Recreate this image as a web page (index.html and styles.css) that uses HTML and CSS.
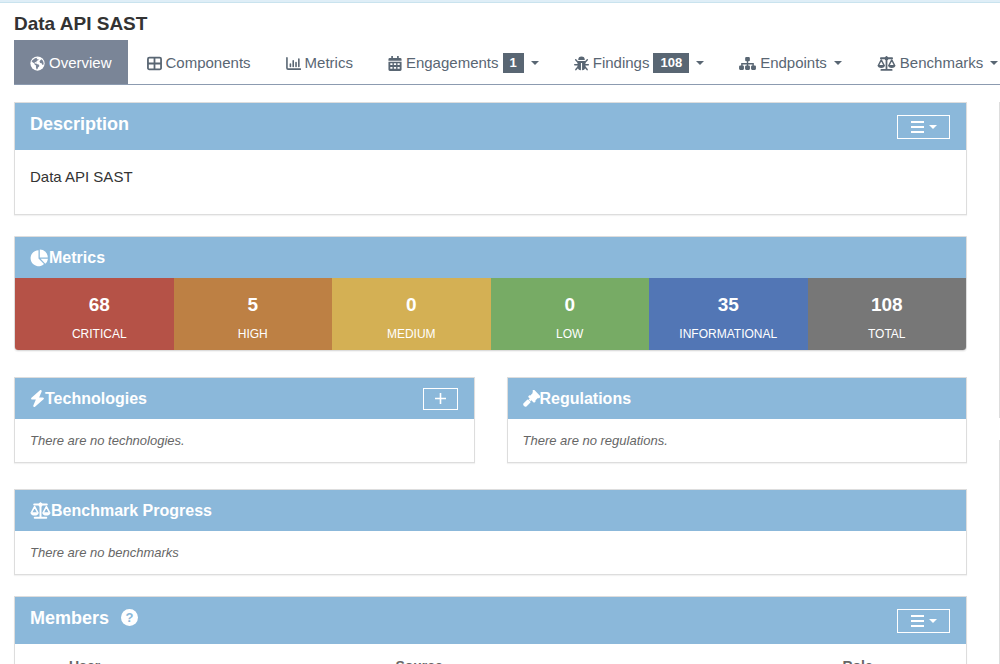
FILE: index.html
```html
<!DOCTYPE html>
<html lang="en">
<head>
<meta charset="utf-8">
<title>Data API SAST</title>
<link rel="stylesheet" href="styles.css">
</head>
<body>
<svg class="defs" aria-hidden="true">
  <symbol id="scale" viewBox="0 0 20 16">
    <path d="M4 2.4h12M10 1v13.5M4.5 14.8h11" fill="none" stroke="currentColor" stroke-width="1.9" stroke-linecap="round"/>
    <circle cx="10" cy="2.6" r="2" fill="currentColor"/>
    <path d="M1.4 10 4.4 4.2 7.4 10M12.6 10l3-5.8 3 5.8" fill="none" stroke="currentColor" stroke-width="1.5" stroke-linejoin="round"/>
    <path d="M.4 9.6h8c0 2.100-1.800 3.200-4 3.200s-4-1.100-4-3.200zM11.600 9.600h8c0 2.100-1.800 3.200-4 3.200s-4-1.100-4-3.200z" fill="currentColor"/>
  </symbol>
</svg>
<div class="topline"></div>
<header class="product">
  <h1>Data API SAST</h1>
  <nav class="tabs">
    <a class="tab active" href="#overview">
      <svg class="icon" width="15" height="15" viewBox="0 0 16 16"><circle cx="8" cy="8" r="7.600" fill="currentColor"/><path fill="#7a8597" d="M1.600 5.500 3 7l1.500.800.600 1.400 1.400.900-.200 1.500.700 2.800 1-.500.500-1.600 1.400-1.500-.200-1.400-1.800-.600-1.300-.900-1.400.100-.300-1.200 1-.500.900.700.100-1.300 1.500-1.200 1-.300-.900-1-.900.500-.600-.700.900-1.200-2.600.500-2.500 1.900zM11 4.400l1.300-.900 1.600 1.700.7 2.600-.5 1.900-1.300-.7-.3-1.300-1.600-.3-.8-1.500z"/></svg>
      Overview</a>
    <a class="tab" href="#components">
      <svg class="icon" width="15" height="15" viewBox="0 0 16 16"><path d="M2.500 1.800h11a1.500 1.500 0 0 1 1.500 1.500v9.400a1.500 1.500 0 0 1-1.500 1.500h-11a1.500 1.500 0 0 1-1.500-1.500V3.300a1.500 1.500 0 0 1 1.500-1.500zM8 2v12M1 8h14" fill="none" stroke="currentColor" stroke-width="1.900"/></svg>
      Components</a>
    <a class="tab" href="#metrics">
      <svg class="icon" width="15" height="15" viewBox="0 0 16 16"><path d="M1 2v10.800q0 1.200 1.200 1.200H15.400" fill="none" stroke="currentColor" stroke-width="1.700" stroke-linecap="round"/><path d="M4.700 11.200V8.500M7.700 11.200V5M10.700 11.200V7M13.700 11.200V3.200" stroke="currentColor" stroke-width="1.700" stroke-linecap="round"/></svg>
      Metrics</a>
    <a class="tab" href="#engagements">
      <svg class="icon" width="14" height="15" viewBox="0 0 14 16"><path fill="currentColor" fill-rule="evenodd" d="M3 0h1.800v2h4.400V0H11v2h1.500Q14 2 14 3.500V5H0V3.500Q0 2 1.500 2H3zM0 6h14v8.500q0 1.500-1.500 1.500h-11Q0 16 0 14.500zM2 7.700v1.800h2.300v-1.800zm3.800 0v1.800h2.400v-1.800zm3.900 0v1.800H12v-1.800zM2 11.700v1.800h2.300v-1.800zm3.800 0v1.800h2.400v-1.800zm3.900 0v1.800H12v-1.800z"/></svg>
      Engagements <span class="badge">1</span><span class="caret"></span></a>
    <a class="tab" href="#findings">
      <svg class="icon" width="15" height="15" viewBox="0 0 16 16"><path d="M4.500 4.200a3.500 3.700 0 0 1 7 0zM3.800 5.200h8.400V11q0 4-3.600 4.300V7.500H7.400v7.800Q3.800 15 3.800 11z" fill="currentColor"/><path d="M4.300 6.800 1.800 4M11.700 6.800 14.200 4M4 9.300H.8M12 9.300h3.200M4.500 11.500 2 14.500M11.500 11.500l2.500 3" stroke="currentColor" stroke-width="1.600" stroke-linecap="round"/></svg>
      Findings <span class="badge">108</span><span class="caret"></span></a>
    <a class="tab" href="#endpoints">
      <svg class="icon" width="17" height="15" viewBox="0 0 18 16"><path d="M9 5v6M3 11V8.200h12V11" fill="none" stroke="currentColor" stroke-width="1.500"/><g fill="currentColor"><rect x="6.500" y="1" width="5" height="4.600" rx="1.200"/><rect x="0" y="10.200" width="5.200" height="4.600" rx="1.200"/><rect x="6.400" y="10.200" width="5.200" height="4.600" rx="1.200"/><rect x="12.800" y="10.200" width="5.200" height="4.600" rx="1.200"/></g></svg>
      Endpoints<span class="caret"></span></a>
    <a class="tab" href="#benchmarks">
      <svg class="icon" width="19" height="15"><use href="#scale"/></svg>
      Benchmarks<span class="caret"></span></a>
  </nav>
</header>
<div class="layout">
  <main class="content">
    <section class="panel">
      <div class="head tall"><h2>Description</h2>
        <button class="menu" aria-label="Description menu"><svg width="13" height="12" viewBox="0 0 13 12"><path d="M0 1h13M0 6h13M0 11h13" stroke="currentColor" stroke-width="2"/></svg><span class="caret"></span></button>
      </div>
      <p class="description">Data API SAST</p>
    </section>
    <section class="panel metrics">
      <div class="head"><h3><svg class="icon" width="19" height="18" viewBox="0 0 19 18"><path fill="currentColor" d="M8.500 1.200v8.300l5.500 5.600A8 8 0 1 1 8.500 1.200zM9.800.5a8 8 0 0 1 8 8h-8zM10.600 9.700H18a8 8 0 0 1-2.700 5z"/></svg>Metrics</h3></div>
      <div class="tiles">
        <div class="tile critical"><strong>68</strong><span>CRITICAL</span></div>
        <div class="tile high"><strong>5</strong><span>HIGH</span></div>
        <div class="tile medium"><strong>0</strong><span>MEDIUM</span></div>
        <div class="tile low"><strong>0</strong><span>LOW</span></div>
        <div class="tile info"><strong>35</strong><span>INFORMATIONAL</span></div>
        <div class="tile total"><strong>108</strong><span>TOTAL</span></div>
      </div>
    </section>
    <div class="split">
      <section class="panel">
        <div class="head"><h3><svg class="icon" width="15" height="17" viewBox="0 0 448 512"><path fill="currentColor" d="M349.4 44.6c5.900-13.700 1.500-29.700-10.600-38.500s-28.600-8-39.900 1.800l-256 224C32.900 240.700 29.200 255.200 34.200 267.800S50.500 288 64 288H175.500L98.600 467.400c-5.900 13.700-1.500 29.700 10.600 38.500s28.600 8 39.900-1.800l256-224c10-8.800 13.600-23.200 8.700-35.700S397.500 224 384 224H272.500L349.400 44.600z"/></svg>Technologies</h3>
          <button class="add" aria-label="Add technology"><svg width="11" height="11" viewBox="0 0 11 11"><path d="M5.500 0v11M0 5.500h11" stroke="currentColor" stroke-width="1.600"/></svg></button>
        </div>
        <p class="empty">There are no technologies.</p>
      </section>
      <section class="panel">
        <div class="head"><h3><svg class="icon" width="17" height="17" viewBox="0 0 17 17"><g fill="currentColor"><path d="M9.200.5q.9-.8 1.700 0l5.500 5.600q.8.800 0 1.700l-.5.500q-.7.600-1.500.1l-2.500 2.500q.4.800-.1 1.300l-.4.400q-.8.700-1.600 0L5.200 8q-.8-.8-.1-1.600l.5-.5q.6-.5 1.300-.1l2.300-2.400q-.4-.8.100-1.300z" transform="translate(.5 -.4)"/><path d="M.6 13.300l3.600-3.500q.6-.6 1.300 0l1.700 1.700q.6.700 0 1.300l-3.500 3.500q-1.400 1.100-2.700-.2-1.400-1.400-.4-2.800z"/><path d="m5.700 9.600 2-2 1.700 1.700-2 2z"/></g></svg>Regulations</h3></div>
        <p class="empty">There are no regulations.</p>
      </section>
    </div>
    <section class="panel">
      <div class="head"><h3><svg class="icon" width="21" height="17"><use href="#scale"/></svg>Benchmark Progress</h3></div>
      <p class="empty">There are no benchmarks</p>
    </section>
    <section class="panel">
      <div class="head tall"><h2>Members <span class="help">?</span></h2>
        <button class="menu" aria-label="Members menu"><svg width="13" height="12" viewBox="0 0 13 12"><path d="M0 1h13M0 6h13M0 11h13" stroke="currentColor" stroke-width="2"/></svg><span class="caret"></span></button>
      </div>
      <table class="members">
        <thead><tr><th class="user">User</th><th>Source</th><th class="role">Role</th></tr></thead>
      </table>
    </section>
  </main>
  <aside class="side"><div class="card"></div><div class="card rest"></div></aside>
</div>
</body>
</html>
```

FILE: styles.css
```css
* { box-sizing: border-box; }
body {
  margin: 0;
  height: 100vh;
  overflow: hidden;
  display: flex;
  flex-direction: column;
  background: #fff;
  color: #333;
  font: 14px/20px "Liberation Sans", Arial, sans-serif;
}
h1, h2, h3, p { margin: 0; }
.defs { display: none; }
.topline {
  flex: none;
  height: 3px;
  background: #dfeef7;
  border-bottom: 1px solid #c9e3ee;
}
.product { flex: none; padding-left: 14px; }
h1 { font-size: 19px; line-height: 37px; padding-top: 2px; height: 37px; }
.tabs {
  display: flex;
  gap: 3px;
  height: 45px;
  border-bottom: 1px solid #8c9bb0;
}
.tab {
  flex: none;
  display: flex;
  align-items: center;
  gap: 4px;
  padding: 2px 16px 0;
  color: #596673;
  font-size: 15px;
  text-decoration: none;
}
.active { background: #7a8597; color: #fff; }
.icon { flex: none; }
.badge {
  padding: 0 7px;
  background: #596673;
  color: #fff;
  font-size: 13px;
  font-weight: bold;
  line-height: 20px;
}
.caret {
  border: 4px solid transparent;
  border-top-color: currentColor;
  border-bottom: 0;
}
.tab .caret { margin-left: 3px; }
.layout {
  flex: 1;
  min-height: 0;
  display: flex;
  gap: 32px;
  padding: 17px 0 0 14px;
}
.content {
  flex: 1;
  display: flex;
  flex-direction: column;
  gap: 21px;
}
.panel {
  flex: 1;
  border: 1px solid #ddd;
  box-shadow: 0 1px 1px rgba(0, 0, 0, 0.05);
}
.content > .panel { flex: none; }
.head {
  display: flex;
  justify-content: space-between;
  align-items: center;
  height: 41px;
  padding: 0 16px 0 15px;
  background: #8bb8da;
  color: #fff;
}
.tall { height: 47px; }
h2 {
  display: flex;
  align-items: center;
  gap: 12px;
  padding-bottom: 6px;
  font-size: 18px;
}
h3 { display: flex; align-items: center; font-size: 16px; }
button {
  display: flex;
  align-items: center;
  justify-content: center;
  gap: 5px;
  height: 24px;
  padding: 0;
  background: none;
  border: 1px solid #fff;
  color: #fff;
}
.menu { width: 53px; }
.add { width: 35px; height: 22px; }
.description { padding: 17px 15px 27px; font-size: 15px; }
.empty {
  padding: 12px 15px 11px;
  color: #666;
  font-size: 13px;
  font-style: italic;
}
.metrics { margin-bottom: 5px; border-radius: 0 0 4px 4px; overflow: hidden; }
.tiles { display: grid; grid-template-columns: repeat(6, 1fr); }
.tile {
  display: flex;
  flex-direction: column;
  align-items: center;
  gap: 9px;
  height: 72px;
  padding-top: 17px;
  color: #fff;
  font-size: 12px;
}
.tile strong { font-size: 19px; }
.critical { padding-left: 10px; background: #b55247; }
.high { background: #bd8044; }
.medium { background: #d4b054; }
.low { background: #77ab65; }
.info { background: #5276b5; }
.total { background: #777; }
.split { display: flex; gap: 32px; margin-bottom: 5px; }
.help {
  width: 17px;
  border-radius: 50%;
  background: #fff;
  color: #8bb8da;
  font-size: 13px;
  line-height: 17px;
  text-align: center;
}
.members { width: 100%; border-collapse: collapse; color: #666; }
.members th { padding: 12px 0 0; text-align: left; font-size: 14px; }
.members .user { width: 40%; padding-left: 54px; }
.members .role { width: 13%; }
.side {
  flex: none;
  width: 1px;
  display: flex;
  flex-direction: column;
  gap: 22px;
}
.card { height: 316px; border-left: 1px solid #ddd; }
.rest { flex: 1; }
```
